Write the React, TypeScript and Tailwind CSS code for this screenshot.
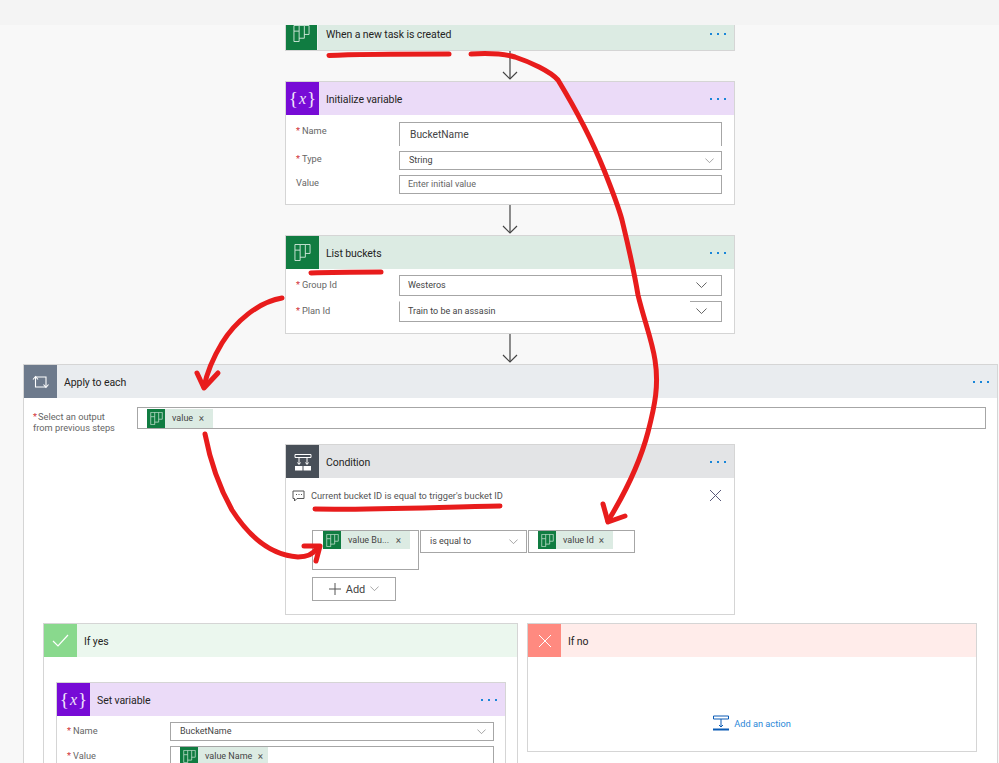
import React from "react";

const font = { fontFamily: "Roboto,'Noto Sans',sans-serif" };

function Planner({ s = 17 }: { s?: number }) {
  return (
    <svg width={s} height={s} viewBox="0 0 18 18" fill="none" stroke="#e4f2ea" strokeWidth="0.9">
      <path d="M1 6.5h5.5v11H1z" />
      <path d="M1 6.5V0.5h5.5v6" />
      <path d="M6.5 0.5h5.5v13.5H6.5" />
      <path d="M12 0.5h5v9.5h-5" />
    </svg>
  );
}

function VarIcon() {
  return (
    <span className="flex items-center gap-[1px] text-[#f1e6fb] text-[19px] leading-none" style={{ fontFamily: "'Liberation Serif',serif" }}>
      <span>{"{"}</span>
      <i className="text-[16px]">x</i>
      <span>{"}"}</span>
    </span>
  );
}

function Dots() {
  return (
    <div className="flex gap-[5px] mr-[8px] ml-auto">
      <span className="w-[2px] h-[2px] bg-[#1a86d8]" />
      <span className="w-[2px] h-[2px] bg-[#1a86d8]" />
      <span className="w-[2px] h-[2px] bg-[#1a86d8]" />
    </div>
  );
}

function Arrow({ h = 30 }: { h?: number }) {
  return (
    <div className="ml-[285px] w-[450px] flex justify-center" style={{ height: h }}>
      <svg width="16" height={h} viewBox={`0 0 16 ${h}`} fill="none" stroke="#444" strokeWidth="1.2">
        <path d={`M8 0V${h - 2}`} />
        <path d={`M1 ${h - 9}L8 ${h - 2}L15 ${h - 9}`} />
      </svg>
    </div>
  );
}

function Chevron({ w = 9, color = "#888" }: { w?: number; color?: string }) {
  return (
    <svg width={w} height={w / 2 + 1} viewBox="0 0 12 7" fill="none" stroke={color} strokeWidth="1" className="shrink-0">
      <path d="M0.5 0.5L6 6L11.5 0.5" />
    </svg>
  );
}

function Header({ bg, iconBg, title, icon, menu = true }: { bg: string; iconBg: string; title: string; icon: React.ReactNode; menu?: boolean }) {
  return (
    <div className={`flex items-center h-[33px] shrink-0 ${bg}`}>
      <div className={`w-[33px] h-[33px] flex items-center justify-center shrink-0 ${iconBg}`}>{icon}</div>
      <span className="ml-[7px] pt-[2px] text-[10.5px] tracking-[-0.08px] text-[#252423]">{title}</span>
      {menu && <Dots />}
    </div>
  );
}

function Label({ text, req = true, w = "w-[113px]", pt = "" }: { text: string; req?: boolean; w?: string; pt?: string }) {
  return (
    <div className={`${w} shrink-0 pl-[10px] text-[9.25px] text-[#666] ${pt}`}>
      {req && <span className="text-[#d13438] mr-[2px]">*</span>}
      {text}
    </div>
  );
}

function Field({ children, cls = "" }: { children?: React.ReactNode; cls?: string }) {
  return <div className={`flex items-center bg-white border border-[#a6a6a6] pl-[9px] pr-[7px] text-[9px] text-[#444] ${cls}`}>{children}</div>;
}

function Token({ text, w, h = 19, icon = 13, tight = false }: { text: string; w: number; h?: number; icon?: number; tight?: boolean }) {
  return (
    <div className="flex items-center bg-[#dcebe3] text-[9px] text-[#444]" style={{ width: w, height: h }}>
      <div className="bg-[#107c41] flex items-center justify-center shrink-0 w-[18px]" style={{ height: h }}>
        <Planner s={icon} />
      </div>
      <span className="ml-[7px] pt-[1px] whitespace-nowrap">{text}</span>
      <span className={`ml-auto pt-[1px] text-[10px] leading-none text-[#555] ${tight ? "mr-[5px]" : "mr-[9px]"}`}>×</span>
    </div>
  );
}

export default function App() {
  return (
    <div className="w-[999px] h-[763px] overflow-hidden bg-[#f8f8f8] relative" style={font}>
      <div className="h-[25px] bg-[#f4f4f4]" />

      {/* Trigger */}
      <div className="ml-[285px] w-[450px] h-[26px] overflow-hidden border-b border-x border-[#d5d5d5] bg-[#dcebe3] flex items-end">
        <div className="w-[32px] h-[33px] bg-[#107c41] flex items-center justify-center shrink-0 border-r border-[#eef5f1]">
          <Planner />
        </div>
        <div className="flex items-center flex-1 h-[33px]">
          <span className="ml-[8px] pt-[2px] text-[10.5px] tracking-[-0.08px] text-[#252423]">When a new task is created</span>
          <Dots />
        </div>
      </div>
      <Arrow />

      {/* Initialize variable */}
      <div className="ml-[285px] w-[450px] h-[124px] bg-white border border-[#d5d5d5] flex flex-col">
        <Header bg="bg-[#ebdbf8]" iconBg="bg-[#770bd6]" title="Initialize variable" icon={<VarIcon />} />
        <div className="flex flex-col pt-[7px] pr-[12px]">
          <div className="flex h-[24px]">
            <Label text="Name" pt="pt-[2px]" />
            <div className="flex-1 h-[24px] bg-white border-t border-x border-[#a6a6a6] flex items-center pl-[10px] text-[10.25px] text-[#444]">BucketName</div>
          </div>
          <div className="flex mt-[5px]">
            <Label text="Type" pt="pt-[1px]" />
            <Field cls="flex-1 h-[19px] justify-between">
              String
              <Chevron />
            </Field>
          </div>
          <div className="flex mt-[5px]">
            <Label text="Value" req={false} pt="pt-[1px]" />
            <Field cls="flex-1 h-[19px] !pl-[8px] text-[#666]">Enter initial value</Field>
          </div>
        </div>
      </div>
      <Arrow />

      {/* List buckets */}
      <div className="ml-[285px] w-[450px] h-[99px] bg-white border border-[#d5d5d5] flex flex-col">
        <Header bg="bg-[#dcebe3]" iconBg="bg-[#107c41]" title="List buckets" icon={<Planner />} />
        <div className="flex flex-col pt-[6px] pr-[12px]">
          <div className="flex">
            <Label text="Group Id" pt="pt-[3px]" />
            <Field cls="flex-1 h-[21px] justify-between !pl-[8px] !pr-[14px]">
              Westeros
              <Chevron w={11} color="#555" />
            </Field>
          </div>
          <div className="flex mt-[5px]">
            <Label text="Plan Id" pt="pt-[3px]" />
            <Field cls="relative flex-1 h-[21px] justify-between !pl-[8px] !pr-[14px] !border-t-white">
              Train to be an assasin
              <Chevron w={11} color="#555" />
              <span className="absolute right-[-1px] top-[-1px] w-[32px] h-px bg-[#a6a6a6]" />
            </Field>
          </div>
        </div>
      </div>
      <Arrow />

      {/* Apply to each */}
      <div className="ml-[23px] w-[975px] h-[500px] bg-white border border-[#d5d5d5]">
        <Header bg="bg-[#e9ecef]" iconBg="bg-[#6d7a8c]" title="Apply to each" icon={
          <svg width="17" height="14" viewBox="0 0 17 14" fill="none" stroke="#fff" strokeWidth="1.1">
            <path d="M1 4.5L3.5 1.5L6 4.5" />
            <path d="M3.5 2V12H14" />
            <path d="M3.5 2H14V12" />
            <path d="M11.5 9.5L14 12.5L16.5 9.5" />
          </svg>
        } />
        <div className="flex pt-[9px] pr-[11px]">
          <div className="w-[113px] shrink-0 pl-[9px] text-[9.25px] leading-[11px] text-[#666] pt-[4px]">
            <span className="text-[#d13438] mr-[1px]">*</span>Select an output<br />from previous steps
          </div>
          <div className="flex-1 h-[22px] bg-white border border-[#a6a6a6] pl-[9px] pt-[1px]">
            <Token text="value" w={66} h={19} />
          </div>
        </div>

        {/* Condition */}
        <div className="ml-[261px] w-[450px] h-[171px] mt-[11px] bg-white border border-[#d5d5d5] flex flex-col">
          <Header bg="bg-[#e3e4e6]" iconBg="bg-[#484f58]" title="Condition" icon={
            <svg width="18" height="18" viewBox="0 0 18 18" fill="none" stroke="#fff" strokeWidth="1">
              <path d="M1 1.5h16v3H1z" />
              <path d="M5 4.5V11M13 4.5V11" />
              <path d="M3.5 9.5L5 11.5L6.5 9.5M11.5 9.5L13 11.5L14.5 9.5" />
              <path d="M1 13h7.5v4.5H1zM9.5 13H17v4.5H9.5z" fill="#fff" stroke="none" />
            </svg>
          } />
          <div className="flex items-center h-[35px] pl-[6px] pr-[12px]">
            <svg width="13" height="12" viewBox="0 0 13 12" fill="none" stroke="#555" strokeWidth="1">
              <path d="M1 1h11v7.5H5L2.5 11V8.5H1z" /><path d="M4 4.5h1M6.5 4.5h1M9 4.5h1" />
            </svg>
            <span className="ml-[6px] text-[9.25px] text-[#555]">Current bucket ID is equal to trigger's bucket ID</span>
            <svg width="13" height="13" viewBox="0 0 13 13" stroke="#5a5a7a" strokeWidth="1" className="ml-auto">
              <path d="M1 1l11 11M12 1L1 12" />
            </svg>
          </div>
          <div className="flex items-start gap-[1px] pl-[26px] pt-[17px]">
            <div className="w-[107px] h-[40px] bg-white border border-[#a6a6a6] pl-[10px]">
              <Token text="value Bu..." w={87} h={18} />
            </div>
            <Field cls="w-[107px] h-[23px] justify-between !pr-[8px] pt-[1px]">
              is equal to
              <Chevron />
            </Field>
            <div className="w-[107px] h-[23px] bg-white border border-[#a6a6a6] pl-[9px]">
              <Token text="value Id" w={75} h={18} />
            </div>
          </div>
          <div className="ml-[26px] mt-[7px] w-[84px] h-[24px] bg-white border border-[#a6a6a6] flex items-center justify-center gap-[5px] text-[11px] text-[#444]">
            <svg width="12" height="12" viewBox="0 0 12 12" stroke="#555" strokeWidth="1"><path d="M6 0v12M0 6h12" /></svg>
            <span className="pt-[2px]">Add</span>
            <Chevron w={9} />
          </div>
        </div>

        {/* Branches */}
        <div className="flex gap-[9px] ml-[19px] mt-[8px]">
          <div className="w-[475px] h-[200px] bg-white border border-[#d5d5d5]">
            <Header bg="bg-[#ebf7ee]" iconBg="bg-[#89d98d]" title="If yes" menu={false} icon={
              <svg width="17" height="13" viewBox="0 0 17 13" fill="none" stroke="#fff" strokeWidth="1.2"><path d="M1 7l5 5L16 1" /></svg>
            } />
            <div className="ml-[12px] mt-[25px] w-[450px] bg-white border border-[#d5d5d5]">
              <Header bg="bg-[#ebdbf8]" iconBg="bg-[#770bd6]" title="Set variable" icon={<VarIcon />} />
              <div className="flex flex-col pt-[6px] pr-[11px]">
                <div className="flex">
                  <Label text="Name" pt="pt-[2px]" />
                  <Field cls="flex-1 h-[19px] justify-between pt-[1px]">
                    BucketName
                    <Chevron />
                  </Field>
                </div>
                <div className="flex mt-[5px]">
                  <Label text="Value" pt="pt-[3px]" />
                  <div className="flex-1 h-[40px] bg-white border border-[#a6a6a6] pl-[9px]">
                    <Token text="value Name" w={88} h={18} tight />
                  </div>
                </div>
              </div>
            </div>
          </div>
          <div className="w-[450px] h-[129px] bg-white border border-[#d5d5d5] flex flex-col">
            <Header bg="bg-[#ffecea]" iconBg="bg-[#ff8a80]" title="If no" menu={false} icon={
              <svg width="14" height="14" viewBox="0 0 14 14" stroke="#fff" strokeWidth="1"><path d="M1 1l12 12M13 1L1 13" /></svg>
            } />
            <div className="flex items-center justify-center gap-[5px] mt-[58px] text-[9.25px] text-[#2b88d8]">
              <svg width="16" height="16" viewBox="0 0 16 16" fill="none" stroke="#0a5bb5" strokeWidth="1">
                <path d="M0.5 1h15v3h-15z" /><path d="M8 4v8M6 10l2 2 2-2" />
                <path d="M0 14.5h16" strokeWidth="2" />
              </svg>
              <span className="pt-[1px]">Add an action</span>
            </div>
          </div>
        </div>
      </div>

      {/* Hand-drawn annotations over the screenshot */}
      <svg className="absolute left-0 top-0 pointer-events-none" width="999" height="763" fill="none" stroke="#e81c1c" strokeWidth="5" strokeLinecap="round" strokeLinejoin="round">
        <path d="M329 55.5C360 54 410 54 449 54" />
        <path d="M471 54C490 53 505 54 515 57C530 62 550 71 558 80C575 108 592 140 604 170C612 190 618 205 622 220C628 245 633 265 638 295C644 320 652 340 655 360C659 385 655 405 648 432C642 455 630 485 608 521" />
        <path d="M603 504L608 522L625 516" />
        <path d="M311 273C335 272 360 272 381 272" />
        <path d="M282 298C258 302 235 322 222 343C213 358 207 372 204 387" />
        <path d="M197 373L204 388L218 373" />
        <path d="M205 434C210 460 218 485 232 510C248 535 270 555 298 557C308 557 314 553 317 548" />
        <path d="M304 546L320 546L316 561" />
        <path d="M315 509C370 510 440 507 500 506" />
      </svg>
    </div>
  );
}
